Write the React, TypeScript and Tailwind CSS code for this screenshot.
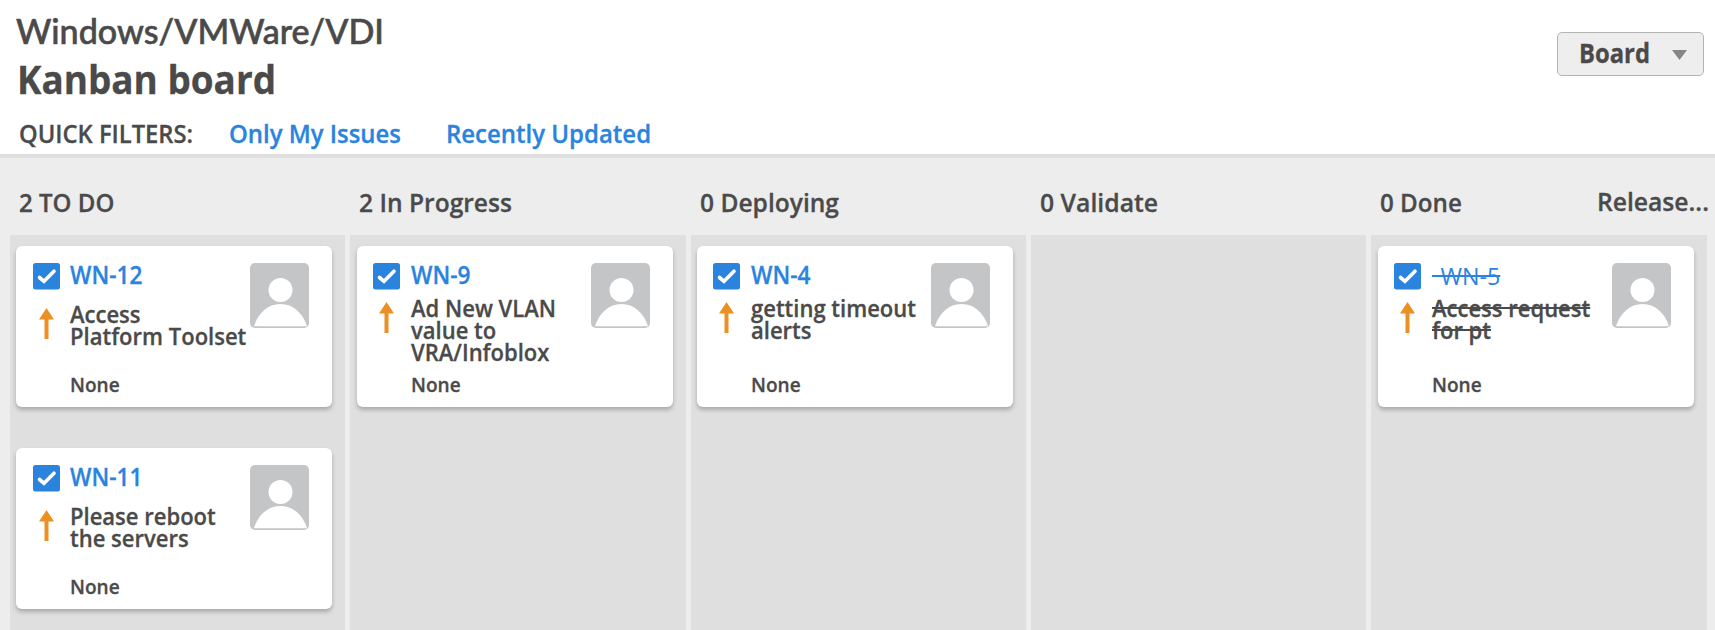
import React from "react";

type Issue = {
  id: string;
  lines: string[];
  low?: boolean;
  done?: boolean;
};

type Column = { title: string; fit: string; issues: Issue[] };

const columns: Column[] = [
  {
    title: "2 TO DO",
    fit: "origin-left scale-x-[0.925]",
    issues: [
      { id: "WN-12", lines: ["Access", "Platform Toolset"], low: true },
      { id: "WN-11", lines: ["Please reboot", "the servers"], low: true },
    ],
  },
  {
    title: "2 In Progress",
    fit: "origin-left scale-x-[0.945]",
    issues: [{ id: "WN-9", lines: ["Ad New VLAN", "value to", "VRA/Infoblox"] }],
  },
  {
    title: "0 Deploying",
    fit: "origin-left scale-x-[0.945]",
    issues: [{ id: "WN-4", lines: ["getting timeout", "alerts"] }],
  },
  { title: "0 Validate", fit: "origin-left scale-x-[0.953]", issues: [] },
  {
    title: "0 Done",
    fit: "origin-left scale-x-[0.93]",
    issues: [{ id: "WN-5", lines: ["Access request", "for pt"], done: true }],
  },
];

function CheckIcon() {
  return (
    <svg className="block h-[27px] w-[27px]" viewBox="0 0 27 27">
      <rect width="27" height="26.5" rx="2.5" fill="#2a84de" />
      <path d="M6.5 14.5 L11 18.3 L21 8.2" fill="none" stroke="#fff" strokeWidth="3.6" strokeLinecap="round" />
    </svg>
  );
}

function ArrowIcon() {
  return (
    <svg className="block h-[31px] w-[15px]" viewBox="0 0 15 31">
      <path d="M7.5 0 L15 11.5 H9.5 V31 H5.5 V11.5 H0 Z" fill="#ec9023" />
    </svg>
  );
}

function Avatar() {
  return (
    <svg className="block h-[65px] w-[59px] shrink-0" viewBox="0 0 59 65">
      <rect width="59" height="65" rx="5" fill="#c4c5c7" />
      <circle cx="30.5" cy="27" r="12" fill="#fff" />
      <path d="M4 63.3 C8 50 18 41 30.5 41 C43 41 53 50 57 63.3 Z" fill="#fff" />
    </svg>
  );
}

function Card({ issue }: { issue: Issue }) {
  return (
    <article className="flex h-[161px] w-[316px] rounded-[6px] bg-white pt-[17px] pl-[16.3px] shadow-[0_3px_4px_rgba(0,0,0,0.24)]">
      <div className="flex w-[37.5px] shrink-0 flex-col">
        <CheckIcon />
        <div className={issue.low ? "pt-[18px] pl-[6px]" : "pt-[12px] pl-[6px]"}>
          <ArrowIcon />
        </div>
      </div>
      <div className="flex w-[180px] shrink-0 flex-col items-start whitespace-nowrap">
        <div
          className={
            issue.done
              ? "h-[26px] origin-left scale-x-[0.97] text-[24px] leading-[26px] font-medium whitespace-pre text-[#2a84de] line-through [word-spacing:2.5px] [-webkit-text-stroke:0px]"
              : "h-[26px] origin-left scale-x-[0.925] text-[24.5px] leading-[24px] font-semibold text-[#2a84de]"
          }
        >
          {issue.done ? " " + issue.id : issue.id}
        </div>
        <div className={issue.low ? "h-[85px] pt-[13px]" : "h-[85px] pt-[7px]"}>
          {issue.lines.map((line) => (
            <div key={line} className="flex h-[22px]">
              <span
                className={
                  issue.done
                    ? "origin-left scale-x-[0.925] text-[23.8px] leading-[24px] font-semibold line-through"
                    : "origin-left scale-x-[0.925] text-[23.8px] leading-[24px] font-semibold"
                }
              >
                {line}
              </span>
            </div>
          ))}
        </div>
        <div className="origin-left scale-x-[0.93] text-[20.5px] leading-[20px] font-semibold">None</div>
      </div>
      <Avatar />
    </article>
  );
}

export default function App() {
  return (
    <div className="h-[630px] w-[1715px] overflow-hidden bg-[#ededed] font-['Open_Sans','Noto_Sans',sans-serif] text-[#4a4a4a] [-webkit-text-stroke:0.3px]">
      <header className="flex h-[158px] justify-between border-b-4 border-[#dfdfdf] bg-white pt-[12px] pr-[11px] pl-[16px]">
        <div className="flex flex-col items-start whitespace-nowrap">
          <h1 className="h-[40px] font-['Lato',sans-serif] text-[34.1px] leading-[37px] font-medium [-webkit-text-stroke:0.6px]">
            Windows/VMWare/VDI
          </h1>
          <h2 className="ml-[1px] h-[66px] origin-left scale-x-[0.922] text-[40px] leading-[54px] font-bold">Kanban board</h2>
          <nav className="flex text-[26px] leading-[30px] font-semibold">
            <div className="w-[211px] pl-[3px]">
              <div className="origin-left scale-x-[0.913]">QUICK FILTERS:</div>
            </div>
            <div className="w-[219px] pl-[2px]">
              <a className="block w-max origin-left scale-x-[0.92] text-[#2a84de]">Only My Issues</a>
            </div>
            <a className="block w-max origin-left scale-x-[0.922] text-[#2a84de]">Recently Updated</a>
          </nav>
        </div>
        <button className="mt-[20px] flex h-[44px] w-[147px] items-center justify-between rounded-[5px] border border-[#b4b4b4] bg-[#eeeeee] pr-[16px] pl-[21px] text-[26px] leading-[30px] font-bold">
          <span className="mb-[3px] origin-left scale-x-[0.915]">Board</span>
          <svg className="mt-[2px] h-[10px] w-[15px]" viewBox="0 0 15 10">
            <path d="M0 0 H15 L7.5 10 Z" fill="#858688" />
          </svg>
        </button>
      </header>
      <main className="flex gap-[5px] pl-[10px]">
        {columns.map((column, index) => (
          <section key={column.title} className="w-[335.35px] shrink-0">
            <div className="flex h-[77px] justify-between pt-[30px] pl-[9px] text-[26px] leading-[28px] font-semibold whitespace-nowrap">
              <h3 className={column.fit}>{column.title}</h3>
              {index === 4 && <span className="-mt-[1px] -mr-[2.5px] origin-right scale-x-[0.95]">Release...</span>}
            </div>
            <div className="flex h-[395px] flex-col gap-[41px] bg-[#dfdfdf] pt-[11px] pl-[6.4px]">
              {column.issues.map((issue) => (
                <Card key={issue.id} issue={issue} />
              ))}
            </div>
          </section>
        ))}
      </main>
    </div>
  );
}
